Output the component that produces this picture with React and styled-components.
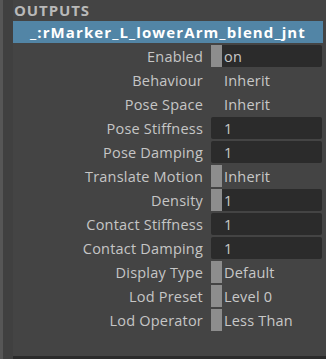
import React from "react";
import styled, { createGlobalStyle } from "styled-components";

const GlobalStyle = createGlobalStyle`
  html, body {
    margin: 0;
    padding: 0;
    background: #444444;
  }
  body {
    font-family: "Open Sans", "Noto Sans", "DejaVu Sans", sans-serif;
  }
`;

const rows = [
  { label: "Enabled", value: "on", swatch: true, boxed: true },
  { label: "Behaviour", value: "Inherit" },
  { label: "Pose Space", value: "Inherit" },
  { label: "Pose Stiffness", value: "1", boxed: true },
  { label: "Pose Damping", value: "1", boxed: true },
  { label: "Translate Motion", value: "Inherit", swatch: true },
  { label: "Density", value: "1", swatch: true, boxed: true },
  { label: "Contact Stiffness", value: "1", boxed: true },
  { label: "Contact Damping", value: "1", boxed: true },
  { label: "Display Type", value: "Default", swatch: true },
  { label: "Lod Preset", value: "Level 0", swatch: true },
  { label: "Lod Operator", value: "Less Than", swatch: true },
];

const App = () => {
  return (
    <>
      <GlobalStyle />
      <Window>
        <EdgeStrip />
        <Gutter />
        <Main>
          <SectionTitle>OUTPUTS</SectionTitle>
          <NodeBar>_:rMarker_L_lowerArm_blend_jnt</NodeBar>
          <AttrList>
            {rows.map((row) => (
              <AttrRow key={row.label}>
                <Label>{row.label}</Label>
                <Field>
                  {row.swatch && <Swatch />}
                  <Value $boxed={row.boxed} $swatch={row.swatch}>
                    {row.value}
                  </Value>
                </Field>
              </AttrRow>
            ))}
          </AttrList>
          <BottomBar />
        </Main>
      </Window>
    </>
  );
};

export default App;

const Window = styled.div`
  display: flex;
  width: 326px;
  height: 359px;
  background: #444444;
  overflow: hidden;
`;

const EdgeStrip = styled.div`
  width: 3px;
  background: #565656;
`;

const Gutter = styled.div`
  width: 10px;
  background: #404040;
`;

const Main = styled.div`
  flex: 1;
  display: flex;
  flex-direction: column;
`;

const SectionTitle = styled.div`
  height: 21px;
  padding-left: 1px;
  font-size: 15px;
  font-weight: 700;
  line-height: 21px;
  color: #b9b9b9;
  letter-spacing: 0.9px;
`;

const NodeBar = styled.div`
  height: 22px;
  margin-right: 3px;
  background: #5285a6;
  color: #ffffff;
  font-size: 15px;
  font-weight: 700;
  line-height: 22px;
  text-align: center;
  letter-spacing: 1.1px;
  white-space: nowrap;
`;

const AttrList = styled.div`
  display: flex;
  flex-direction: column;
  gap: 2px;
  margin-top: 2px;
`;

const AttrRow = styled.div`
  display: grid;
  grid-template-columns: 190px 111px;
  column-gap: 8px;
  height: 22px;
  align-items: center;
`;

const Label = styled.div`
  text-align: right;
  font-size: 14.5px;
  letter-spacing: 0.2px;
  color: #c6c6c6;
  white-space: nowrap;
`;

const Field = styled.div`
  display: flex;
  height: 22px;
`;

const Swatch = styled.div`
  width: 11px;
  background: #8d8d8d;
`;

const Value = styled.div`
  flex: 1;
  display: flex;
  align-items: center;
  padding-left: ${(p) => (p.$swatch ? 2 : 13)}px;
  background: ${(p) => (p.$boxed ? "#2b2b2b" : "transparent")};
  border-radius: ${(p) => (p.$swatch ? "0 2px 2px 0" : "2px")};
  font-size: 14.5px;
  letter-spacing: 0.2px;
  color: #c8c8c8;
  white-space: nowrap;
`;

const BottomBar = styled.div`
  margin-top: auto;
  height: 3px;
  background: #2b2b2b;
`;
